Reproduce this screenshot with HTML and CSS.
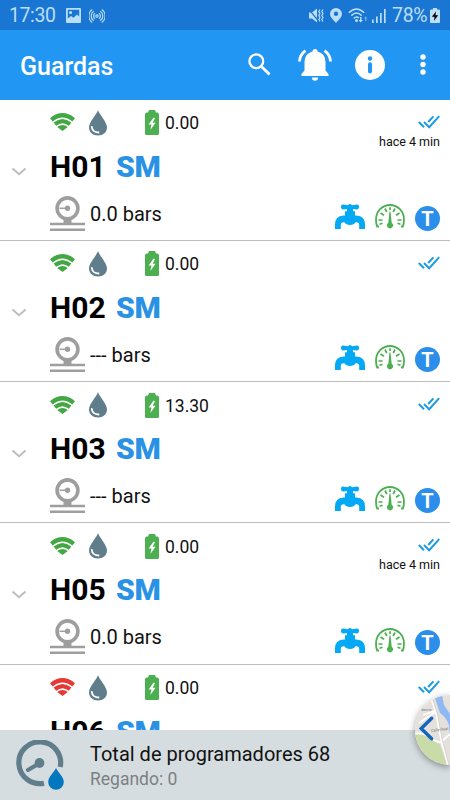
FILE: index.html
```
<!DOCTYPE html>
<html lang="es">
    <head>
        <meta charset="utf-8">
        <meta name="viewport" content="width=device-width, initial-scale=1">
        <title>Guardas</title>
        <link rel="stylesheet" href="styles.css">
    </head>
    <body>
        <!-- icons used by every row -->
        <svg class="sprite">
            <symbol id="wifi" viewBox="0 0 25 18">
                <path d="M0 5.2Q12.5-5 25 5.2L22.3 8.5Q12.5 .4 2.700 8.5Z"/>
                <path d="M3.6 9.6Q12.5 2.4 21.4 9.6L18.800 12.8Q12.5 7.600 6.200 12.8Z"/>
                <path d="M7.2 14Q12.5 9.800 17.800 14L12.5 18Z"/>
            </symbol>
            <symbol id="drop" viewBox="0 0 18 26">
                <path d="M9 0C10 4 18 12 18 17.3C18 22.5 14 25.5 9 25.5S0 22.5 0 17.3C0 12 8 4 9 0Z" fill="#607d8b"/>
                <path d="M2.8 17C3.200 20.3 5.200 22.3 9.5 22.500" fill="none" stroke="#fff" stroke-width="1.9" stroke-linecap="round"/>
            </symbol>
            <symbol id="battery" viewBox="0 0 14 25">
                <path d="M4 0H10L11 2.5H12.5Q14 3 14 4.5V23.5Q14 25 12.5 25H1.5Q0 25 0 23.5V4.5Q0 3 1.5 2.5H3Z" fill="#4caf50"/>
                <path d="M8.6 7.5L3.6 14.4H6.5L5.3 20L10.6 12.8H7.6L10 8.2Z" fill="#fff"/>
            </symbol>
            <symbol id="chevron" viewBox="0 0 16 10">
                <path d="M1.5 1.5L8 7.2L14.5 1.5" fill="none" stroke="#bdbdbd" stroke-width="2"/>
            </symbol>
            <symbol id="pressure" viewBox="0 0 35 36">
                <g fill="none" stroke="#9e9e9e">
                    <circle cx="17.5" cy="12.300" r="10.400" stroke-width="3.600"/>
                    <path d="M9.500 12.300H17" stroke-width="1.500"/>
                    <path d="M0 28H35M0 33.800H35" stroke-width="2.600"/>
                </g>
                <path d="M13.500 23H21.500V28H13.500Z" fill="#9e9e9e"/>
                <circle cx="17.500" cy="12.300" r="2.700" fill="#9e9e9e"/>
            </symbol>
            <symbol id="checks" viewBox="0 0 22 14">
                <path d="M.8 7L6 12.200M6 7L11.200 12.200L21.200 1.200M10.200 7L15.400 1.400" fill="none" stroke="#1e9be0" stroke-width="2"/>
            </symbol>
            <symbol id="tap" viewBox="0 0 30 25">
                <path d="M6 2.500Q6 .4 8 .6L13 1.200Q15-1 17 1.200L22 .6Q24 .4 24 2.700Q24 5.600 21.500 5.400L18 5V7.300H20V11.500H21.500Q30 12 30 20.500V25H24.200V21Q24.200 18.300 21.500 18.300H20.500Q19 21 15 21T9.500 18.300H8.500Q5.800 18.300 5.800 21V25H0V20.500Q0 12 8.500 11.500H10V7.300H12V5L8.500 5.400Q6 5.600 6 2.500Z" fill="#03a9f4"/>
            </symbol>
            <symbol id="gauge" viewBox="0 0 30 25">
                <g fill="none" stroke="#4caf50">
                    <path d="M4 22.500H2.200Q1 20 1 15.500A14 14.500 0 0 1 29 15.500Q29 20 27.800 22.500H26" stroke-width="1.800"/>
                    <path d="M3.500 16H7.500M26.500 16H22.500M5.500 9L9 11.300M24.500 9L21 11.300M10 4.500L11.800 8M20 4.500L18.200 8M15 3.200V6M4.500 20.300L7.500 19.300M25.500 20.300L22.500 19.300" stroke-width="1.700"/>
                </g>
                <path d="M14.500 7.500H15.500L16.700 18.700A3.100 3.100 0 1 1 13.300 18.700Z" fill="#4caf50"/>
            </symbol>
        </svg>

        <div class="status_bar">
            <span class="clock">17:30</span>
            <svg class="st_image" width="15" height="15" viewBox="0 0 15 15">
                <path fill-rule="evenodd" d="M1 0H14Q15 0 15 1V14Q15 15 14 15H1Q0 15 0 14V1Q0 0 1 0ZM1.800 1.800V10.500L5 8L7.500 9.800L11 6.500L13.200 8.500V1.800ZM3 4.500A1.600 1.600 0 1 1 6.200 4.500A1.600 1.600 0 1 1 3 4.500Z"/>
            </svg>
            <svg class="st_cast" width="16" height="14" viewBox="0 0 16 14">
                <g fill="none" stroke="#bbdefb" stroke-width="1.200">
                    <circle cx="8" cy="7" r="1.200"/>
                    <path d="M6 4.200A3.500 3.500 0 0 0 6 9.800M10 4.200A3.500 3.500 0 0 1 10 9.800M4.700 2.200A5.800 5.800 0 0 0 4.700 11.800M11.300 2.200A5.800 5.800 0 0 1 11.300 11.800M3.200.5A8 8 0 0 0 3.200 13.500M12.800.5A8 8 0 0 1 12.800 13.500"/>
                </g>
            </svg>
            <span class="spacer"></span>
            <svg class="st_mute" width="16" height="15" viewBox="0 0 16 15">
                <path d="M1 4.500H4L9 .5V14.500L4 10.500H1Z"/>
                <path d="M.5.800L10.500 13" stroke="#1976d2" stroke-width="1.200"/>
                <path d="M12 1.500L10.800 3.500L12 5.500L10.800 7.500L12 9.500L10.800 11.500L12 13.500M15 1.500L13.800 3.500L15 5.500L13.800 7.500L15 9.500L13.800 11.500L15 13.500" fill="none" stroke="#bbdefb" stroke-width="1.200"/>
            </svg>
            <svg class="st_pin" width="12" height="15" viewBox="0 0 12 15">
                <path fill-rule="evenodd" d="M6 0A6 5.800 0 0 1 12 5.800C12 9.500 8 12.500 6 15C4 12.500 0 9.500 0 5.800A6 5.800 0 0 1 6 0ZM6 3.600A2.200 2.200 0 1 0 6 8A2.200 2.200 0 1 0 6 3.600Z"/>
            </svg>
            <svg class="st_wifi" width="20" height="15" viewBox="0 0 20 15">
                <path d="M.8 4.800Q8.500-2.800 16.200 4.800M3.300 7.600Q8.500 2.400 13.700 7.600M5.800 10.400Q8.500 7.800 11 10" fill="none" stroke="#bbdefb" stroke-width="1.500"/>
                <circle cx="8.500" cy="12.500" r="1.500"/>
                <path d="M12 9H13.500V12H15L12.700 14.500L10.500 12H12Z"/>
                <path d="M17 13V10.500H16L17.700 8L19.400 10.500H18.400V13Z" opacity=".5"/>
            </svg>
            <svg class="st_signal" width="14" height="14" viewBox="0 0 14 14">
                <path d="M0 10.500H1.700V14H0ZM4 7.500H5.700V14H4ZM8 4H9.700V14H8ZM12 0H13.700V14H12Z"/>
            </svg>
            <span class="percent">78%</span>
            <svg class="st_battery" width="10" height="15" viewBox="0 0 10 15">
                <path d="M3 0H7V1.500H9Q10 1.500 10 2.500V14Q10 15 9 15H1Q0 15 0 14V2.500Q0 1.500 1 1.500H3Z"/>
                <path d="M6 3.500L1.800 8.800H4.500L4 12.800L8.200 7.300H5.500Z" fill="#000"/>
            </svg>
        </div>

        <div class="app_bar">
            <h1>Guardas</h1>
            <svg class="search" width="23" height="23" viewBox="0 0 23 23">
                <circle cx="8.300" cy="8.300" r="6.900" fill="none" stroke="#fff" stroke-width="2.300"/>
                <path d="M13.200 13.200L21.500 21.500" stroke="#fff" stroke-width="2.800"/>
            </svg>
            <svg class="bell" width="34" height="32" viewBox="0 0 34 32">
                <path d="M14.500 2.500Q14.500 0 17 0T19.500 2.500Q27.500 4.500 27.500 13V21.500L30.500 25V27H3.500V25L6.500 21.500V13Q6.500 4.500 14.500 2.500ZM14 28.500H20Q20 31.800 17 31.800T14 28.500Z" fill="#fff"/>
                <path d="M1.500 12.500Q2 5.500 7.500 1.700M32.500 12.500Q32 5.500 26.500 1.700" fill="none" stroke="#fff" stroke-width="2.800"/>
            </svg>
            <svg class="info" width="30" height="30" viewBox="0 0 30 30">
                <circle cx="15" cy="15" r="15" fill="#fff"/>
                <circle cx="15" cy="8.500" r="2.200" fill="#2196f3"/>
                <path d="M15 14.300V21.500" stroke="#2196f3" stroke-width="4" stroke-linecap="round"/>
            </svg>
            <svg class="more" width="6" height="21" viewBox="0 0 6 21">
                <g fill="#fff"><circle cx="3" cy="3" r="2.700"/><circle cx="3" cy="10.500" r="2.700"/><circle cx="3" cy="18" r="2.700"/></g>
            </svg>
        </div>

        <div class="list">
            <div class="row">
                <svg class="chevron"><use href="#chevron"/></svg>
                <div class="data">
                    <div class="signals"><svg class="wifi"><use href="#wifi"/></svg><svg class="drop"><use href="#drop"/></svg><svg class="battery"><use href="#battery"/></svg><span>0.00</span></div>
                    <div class="name">H01 <b>SM</b></div>
                    <div class="bars"><svg class="pressure"><use href="#pressure"/></svg><span>0.0 bars</span></div>
                </div>
                <div class="state">
                    <svg class="checks"><use href="#checks"/></svg>
                    <span class="ago">hace 4 min</span>
                    <div class="tools"><svg class="tap"><use href="#tap"/></svg><svg class="gauge"><use href="#gauge"/></svg><span class="type">T</span></div>
                </div>
            </div>
            <div class="row">
                <svg class="chevron"><use href="#chevron"/></svg>
                <div class="data">
                    <div class="signals"><svg class="wifi"><use href="#wifi"/></svg><svg class="drop"><use href="#drop"/></svg><svg class="battery"><use href="#battery"/></svg><span>0.00</span></div>
                    <div class="name">H02 <b>SM</b></div>
                    <div class="bars"><svg class="pressure"><use href="#pressure"/></svg><span>--- bars</span></div>
                </div>
                <div class="state">
                    <svg class="checks"><use href="#checks"/></svg>
                    <div class="tools"><svg class="tap"><use href="#tap"/></svg><svg class="gauge"><use href="#gauge"/></svg><span class="type">T</span></div>
                </div>
            </div>
            <div class="row">
                <svg class="chevron"><use href="#chevron"/></svg>
                <div class="data">
                    <div class="signals"><svg class="wifi"><use href="#wifi"/></svg><svg class="drop"><use href="#drop"/></svg><svg class="battery"><use href="#battery"/></svg><span>13.30</span></div>
                    <div class="name">H03 <b>SM</b></div>
                    <div class="bars"><svg class="pressure"><use href="#pressure"/></svg><span>--- bars</span></div>
                </div>
                <div class="state">
                    <svg class="checks"><use href="#checks"/></svg>
                    <div class="tools"><svg class="tap"><use href="#tap"/></svg><svg class="gauge"><use href="#gauge"/></svg><span class="type">T</span></div>
                </div>
            </div>
            <div class="row">
                <svg class="chevron"><use href="#chevron"/></svg>
                <div class="data">
                    <div class="signals"><svg class="wifi"><use href="#wifi"/></svg><svg class="drop"><use href="#drop"/></svg><svg class="battery"><use href="#battery"/></svg><span>0.00</span></div>
                    <div class="name">H05 <b>SM</b></div>
                    <div class="bars"><svg class="pressure"><use href="#pressure"/></svg><span>0.0 bars</span></div>
                </div>
                <div class="state">
                    <svg class="checks"><use href="#checks"/></svg>
                    <span class="ago">hace 4 min</span>
                    <div class="tools"><svg class="tap"><use href="#tap"/></svg><svg class="gauge"><use href="#gauge"/></svg><span class="type">T</span></div>
                </div>
            </div>
            <div class="row">
                <div class="data no_chevron">
                    <div class="signals"><svg class="wifi offline"><use href="#wifi"/></svg><svg class="drop"><use href="#drop"/></svg><svg class="battery"><use href="#battery"/></svg><span>0.00</span></div>
                    <div class="name">H06 <b>SM</b></div>
                </div>
                <div class="state">
                    <svg class="checks"><use href="#checks"/></svg>
                </div>
            </div>
        </div>

        <div class="footer">
            <svg class="total" width="48" height="50" viewBox="0 0 48 50">
                <path d="M44.200 27A20.900 20.900 0 1 0 28 43.200" fill="none" stroke="#607d8b" stroke-width="5.200"/>
                <path d="M12 30L23 23.500" stroke="#607d8b" stroke-width="4.200" stroke-linecap="round"/>
                <circle cx="23.500" cy="23" r="4.900" fill="#607d8b"/>
                <path d="M40 28C41.500 32 47.800 36.500 47.800 42A7.800 7.800 0 0 1 32.200 42C32.200 36.500 38.500 32 40 28Z" fill="#0277bd"/>
            </svg>
            <div class="summary">
                <div class="total_text">Total de programadores 68</div>
                <div class="watering">Regando: 0</div>
            </div>
        </div>

        <!-- button that opens the map -->
        <div class="map_button">
            <svg width="35" height="70" viewBox="0 0 35 70">
                <rect width="35" height="70" fill="#e4e1dc"/>
                <path d="M0 39Q9 38 16 43.500Q21 48 25 49L32 70H0Z" fill="#c8dba8"/>
                <path d="M19 0H27L29 10L35 19V42L34 30Q31 22 25 18Z" fill="#8fb8f5"/>
                <path d="M15 0L21 18L26 44L33 70M0 38.500Q9 37.500 16 43Q21 47.500 26 47L35 39M4 28L20 17M26 46L28 53M8 20L21 15" fill="none" stroke="#fff" stroke-width="1.800"/>
                <path d="M16.500 0L22.300 18L27 44L34 70" fill="none" stroke="#c9c4bd" stroke-width=".6"/>
                <text x="6" y="16" class="street">Barrio</text>
                <text x="16" y="37" class="street" transform="rotate(-7 16 37)">Calle Real</text>
                <path d="M16.700 23.200L6.200 33.500L16.700 43.700" fill="none" stroke="#1565c0" stroke-width="3.400" stroke-linecap="round"/>
            </svg>
        </div>
    </body>
</html>
```
FILE: styles.css
```
body {

    width: 450px;
    height: 800px;

    margin: 0;
    overflow: hidden;

    display: flex;
    flex-direction: column;
    position: relative;

    font-family: Roboto, "Liberation Sans", sans-serif;
    color: #111;
    background: #fff;
}

svg {

    display: block;
    flex-shrink: 0;
}

.sprite {

    width: 0;
    height: 0;
    position: absolute;
}

.status_bar {

    height: 30px;
    flex-shrink: 0;
    box-sizing: border-box;
    padding: 1px 10px 0 9px;

    display: flex;
    align-items: center;

    font-size: 19.5px;
    color: #bbdefb;
    fill: #bbdefb;
    background: #1976d2;
}

.spacer { flex: 1; }
.clock { width: 57px; letter-spacing: -0.4px; }
.st_cast { margin-left: 8px; }
.st_pin { margin-left: 6px; }
.st_wifi { margin-left: 6px; }
.st_signal { margin-left: 4px; }
.percent { width: 35px; margin-left: 6px; letter-spacing: -0.3px; }
.st_battery { margin-left: 3px; }

.app_bar {

    height: 69.5px;
    flex-shrink: 0;
    box-sizing: border-box;
    padding: 0 24px 0 20px;

    display: flex;
    align-items: center;

    color: #fff;
    background: #2196f3;
}

.app_bar h1 {

    flex: 1;
    margin: 3px 0 0 0;

    font-size: 25px;
    font-weight: 500;
}

.bell { margin-left: 27px; }
.info { margin-left: 23px; }
.more { margin-left: 35px; }

.list {

    flex: 1;
    min-height: 0;
    overflow: hidden;
}

.row {

    height: 141.25px;
    box-sizing: border-box;
    border-bottom: 1px solid #bdbdbd;

    display: flex;
}

.chevron {

    width: 16px;
    height: 10px;
    margin: 67px 23px 0 11px;
}

.data { flex: 1; }
.no_chevron { margin-left: 50px; }

.signals {

    height: 46px;

    display: flex;
    align-items: center;

    font-size: 17.5px;
}

.wifi { width: 25px; height: 18px; margin-top: -1px; fill: #43a843; }
.offline { fill: #e53935; }
.drop { width: 18px; height: 26px; margin: 0 38px 0 14px; }
.battery { width: 14px; height: 25px; margin-right: 6px; }
.signals span { margin-top: 1px; }

.name {

    height: 42px;

    font-size: 30px;
    font-weight: 700;
    line-height: 42px;
    color: #000;
}

.name b {

    margin-left: 3px;
    color: #2a92e5;
    letter-spacing: -0.3px;
}

.bars {

    height: 52px;

    display: flex;
    align-items: center;

    font-size: 20px;
}

.pressure { width: 35px; height: 36px; margin-right: 5px; }

.state {

    padding-right: 10px;

    display: flex;
    flex-direction: column;
    align-items: flex-end;
}

.checks { width: 22px; height: 14px; margin-top: 15px; }

.ago {

    margin-top: 5px;

    font-size: 12.5px;
    line-height: 15px;
}

.tools {

    margin-top: auto;
    margin-bottom: 9px;

    display: flex;
    align-items: center;
    gap: 10px;
}

.tap { width: 30px; height: 25px; margin-top: -4px; }
.gauge { width: 30px; height: 25px; margin-top: -4px; }

.type {

    width: 25px;
    height: 25px;
    border-radius: 50%;

    font-size: 20px;
    font-weight: 700;
    line-height: 26px;
    text-align: center;
    color: #fff;
    background: #2a8eea;
}

.footer {

    height: 70px;
    flex-shrink: 0;

    display: flex;
    background: #d6dde0;
}

.total { margin: 10px 26px 0 16px; }

.total_text {

    margin-top: 12px;

    font-size: 20px;
    line-height: 24px;
    color: #111;
}

.watering {

    margin-top: 3px;

    font-size: 17.5px;
    line-height: 21px;
    color: #7b8083;
}

/* lies over the list and the footer, cut by the right edge */
.map_button {

    width: 35px;
    height: 70px;
    border-radius: 35px 0 0 35px;
    overflow: hidden;

    position: absolute;
    right: 0;
    top: 695px;

    box-shadow: 0 2px 7px rgba(0, 0, 0, 0.4);
}

.street {

    font-size: 4px;
    fill: #777;
}
```
